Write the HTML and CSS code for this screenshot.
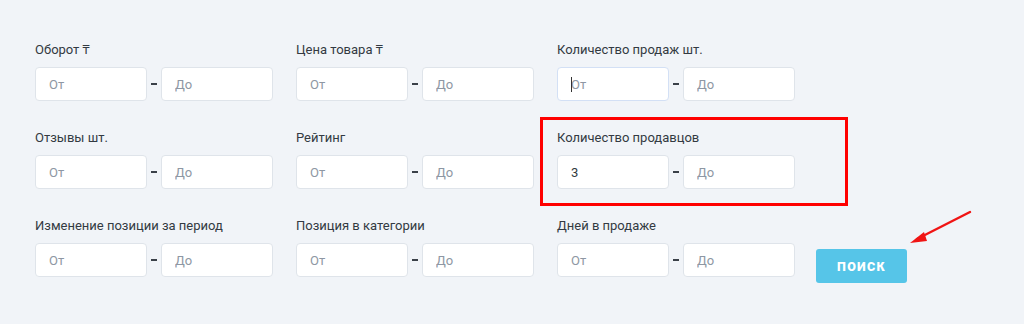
FILE: index.html
```html
<!DOCTYPE html>
<html lang="ru">
<head>
  <meta charset="UTF-8">
  <title>Фильтры</title>
  <link rel="stylesheet" href="styles.css">
</head>
<body>
  <form class="filters">
    <div class="field">
      <label>Оборот ₸</label>
      <div class="range">
        <input type="text" placeholder="От">
        <span class="dash"></span>
        <input type="text" placeholder="До">
      </div>
    </div>
    <div class="field">
      <label>Цена товара ₸</label>
      <div class="range">
        <input type="text" placeholder="От">
        <span class="dash"></span>
        <input type="text" placeholder="До">
      </div>
    </div>
    <div class="field">
      <label>Количество продаж шт.</label>
      <div class="range">
        <div class="focused">
          <span class="caret"></span>
          <input type="text" placeholder="От">
        </div>
        <span class="dash"></span>
        <input type="text" placeholder="До">
      </div>
    </div>
    <div class="spacer"></div>

    <div class="field">
      <label>Отзывы шт.</label>
      <div class="range">
        <input type="text" placeholder="От">
        <span class="dash"></span>
        <input type="text" placeholder="До">
      </div>
    </div>
    <div class="field">
      <label>Рейтинг</label>
      <div class="range">
        <input type="text" placeholder="От">
        <span class="dash"></span>
        <input type="text" placeholder="До">
      </div>
    </div>
    <div class="field highlighted">
      <label>Количество продавцов</label>
      <div class="range">
        <input type="text" placeholder="От" value="3">
        <span class="dash"></span>
        <input type="text" placeholder="До">
      </div>
    </div>
    <div class="spacer"></div>

    <div class="field">
      <label>Изменение позиции за период</label>
      <div class="range">
        <input type="text" placeholder="От">
        <span class="dash"></span>
        <input type="text" placeholder="До">
      </div>
    </div>
    <div class="field">
      <label>Позиция в категории</label>
      <div class="range">
        <input type="text" placeholder="От">
        <span class="dash"></span>
        <input type="text" placeholder="До">
      </div>
    </div>
    <div class="field">
      <label>Дней в продаже</label>
      <div class="range">
        <input type="text" placeholder="От">
        <span class="dash"></span>
        <input type="text" placeholder="До">
      </div>
    </div>
    <div class="actions">
      <button type="button">Поиск</button>
      <svg class="arrow" width="70" height="40" viewBox="0 0 70 40">
        <line x1="63" y1="3" x2="10" y2="30" stroke="#f01414" stroke-width="2.4" stroke-linecap="round"/>
        <polygon points="3,34 17,23 20,32" fill="#f01414"/>
      </svg>
    </div>
  </form>
</body>
</html>
```

FILE: styles.css
```css
body {
  margin: 0;
  background-color: #f1f4f8;
  font-family: Roboto, "Noto Sans", sans-serif;
  color: #333a42;
}
.filters {
  display: grid;
  grid-template-columns: 261px 261px 261px auto;
  row-gap: 28px;
  padding: 41px 0 0 35px;
}
.field label {
  display: block;
  font-size: 13px;
  line-height: 18px;
  margin-bottom: 8px;
}
.range {
  display: flex;
  align-items: center;
  width: 238px;
}
.range input {
  width: 112px;
  height: 34px;
  box-sizing: border-box;
  border: 1px solid #dfe4ea;
  border-radius: 4px;
  background: #fff;
  padding: 0 13px;
  font-family: inherit;
  font-size: 13px;
  color: #333a42;
  outline: none;
}
.range input::placeholder {
  color: #8e97a3;
}
.focused {
  position: relative;
  display: flex;
}
.focused input {
  border-color: #d3e0f5;
}
.caret {
  position: absolute;
  left: 14px;
  top: 10px;
  width: 1px;
  height: 15px;
  background: #333;
}
.dash {
  width: 7px;
  height: 2px;
  margin: 0 4px;
  background: #3a4048;
}
.highlighted {
  position: relative;
}
.highlighted::after {
  content: "";
  position: absolute;
  left: -17px;
  top: -12px;
  width: 302px;
  height: 83px;
  border: 3px solid #f00;
}
.actions {
  position: relative;
  display: flex;
  align-items: flex-start;
  padding-top: 32px;
  margin-left: -2px;
}
.actions button {
  display: block;
  width: 91px;
  height: 34px;
  padding: 0;
  border: none;
  border-radius: 3px;
  background-color: #56c5e8;
  color: #fff;
  font-family: inherit;
  font-size: 12.5px;
  font-weight: 900;
  letter-spacing: 1.3px;
  text-transform: uppercase;
  cursor: pointer;
}
.arrow {
  position: absolute;
  left: 91px;
  top: -8px;
}
```
